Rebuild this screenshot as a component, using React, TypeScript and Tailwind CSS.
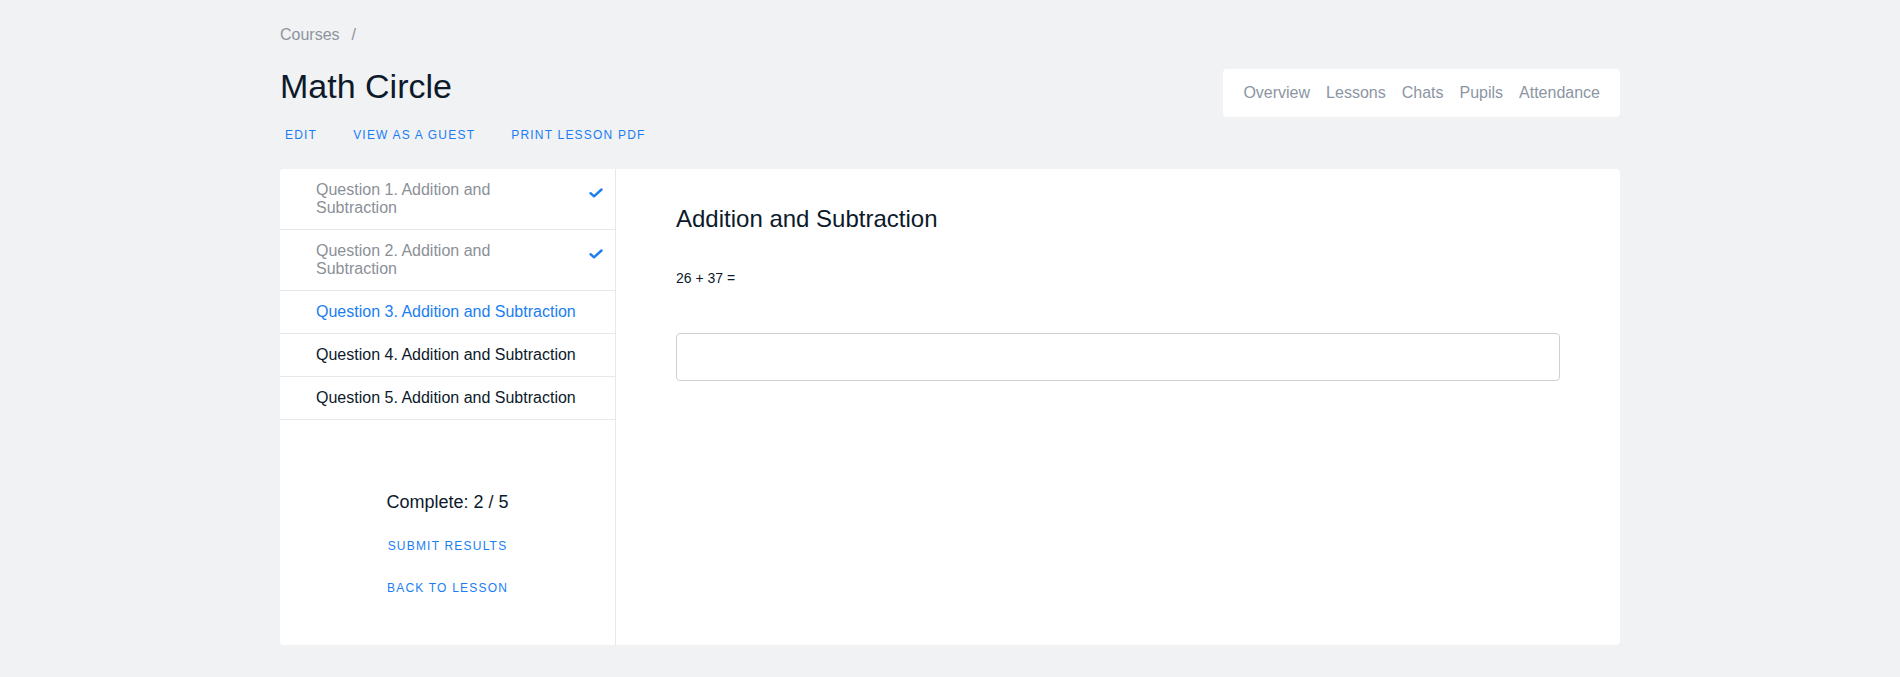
const questions = [
  { title: "Question 1. Addition and Subtraction", state: "done" },
  { title: "Question 2. Addition and Subtraction", state: "done" },
  { title: "Question 3. Addition and Subtraction", state: "active" },
  { title: "Question 4. Addition and Subtraction", state: "todo" },
  { title: "Question 5. Addition and Subtraction", state: "todo" },
];

const tabs = ["Overview", "Lessons", "Chats", "Pupils", "Attendance"];

function CheckMark() {
  return (
    <svg width="14" height="10" viewBox="0 0 14 10" fill="none">
      <path
        d="M1.5 5.2 L5 8.3 L12.5 1.5"
        stroke="#1a7ef2"
        strokeWidth="2.4"
        strokeLinecap="round"
        strokeLinejoin="round"
      />
    </svg>
  );
}

export default function App() {
  return (
    <div
      className="min-h-[677px] bg-[#f1f2f4] text-[#0c1a2b]"
      style={{ fontFamily: '"Liberation Sans", Arial, sans-serif' }}
    >
      <div className="mx-auto w-[1340px] pt-[23px]">
        {/* breadcrumb */}
        <div className="flex text-[16px] leading-[24px] text-[#8e949c]">
          <span>Courses</span>
          <span className="ml-[12px]">/</span>
        </div>

        {/* header */}
        <div className="mt-[19px] flex items-start justify-between">
          <div>
            <h1 className="text-[34px] leading-[40px] font-normal">Math Circle</h1>
            <div className="mt-[21px] ml-[5px] flex gap-[36px] text-[12px] leading-[16px] tracking-[0.1em] text-[#1a7ef2]">
              <button className="uppercase">Edit</button>
              <button className="uppercase">View as a guest</button>
              <button className="uppercase">Print lesson PDF</button>
            </div>
          </div>
          <nav className="mt-[3px] flex gap-[16px] rounded-[4px] bg-white px-[20px] py-3 text-[16px] leading-[24px] text-[#8c95a3]">
            {tabs.map((t) => (
              <a key={t}>{t}</a>
            ))}
          </nav>
        </div>

        {/* card */}
        <div className="mt-[26px] flex h-[476px] rounded-[4px] bg-white">
          {/* sidebar */}
          <div className="flex w-[336px] flex-col border-r border-[#e6e8eb]">
            {questions.map((q) => (
              <div
                key={q.title}
                className="flex items-start border-b border-[#e6e8eb] py-3 pl-[36px] pr-[12px] text-[16px] leading-[18px]"
              >
                <div
                  className={`flex-1 ${
                    q.state === "done"
                      ? "pr-[40px] text-[#8b9097]"
                      : q.state === "active"
                      ? "text-[#1a7ef2]"
                      : "text-[#0c1a2b]"
                  }`}
                >
                  {q.title}
                </div>
                {q.state === "done" && (
                  <div className="mt-[7px]">
                    <CheckMark />
                  </div>
                )}
              </div>
            ))}

            <div className="flex flex-col items-center pt-[70px]">
              <p className="text-[18px] leading-[24px]">Complete: 2 / 5</p>
              <button className="mt-[24px] text-[12px] leading-[16px] uppercase tracking-[0.1em] text-[#1a7ef2]">
                Submit results
              </button>
              <button className="mt-[26px] text-[12px] leading-[16px] uppercase tracking-[0.1em] text-[#1a7ef2]">
                Back to lesson
              </button>
            </div>
          </div>

          {/* question */}
          <div className="flex-1 px-[60px] pt-[36px]">
            <h2 className="text-[24px] leading-[28px] font-normal">Addition and Subtraction</h2>
            <p className="mt-[35px] text-[14px] leading-[20px]">26 + 37 =</p>
            <input
              type="text"
              className="mt-[45px] block h-[48px] w-full rounded-[4px] border border-[#cdd1d6] px-3 text-[16px] outline-none"
            />
          </div>
        </div>
      </div>
    </div>
  );
}
